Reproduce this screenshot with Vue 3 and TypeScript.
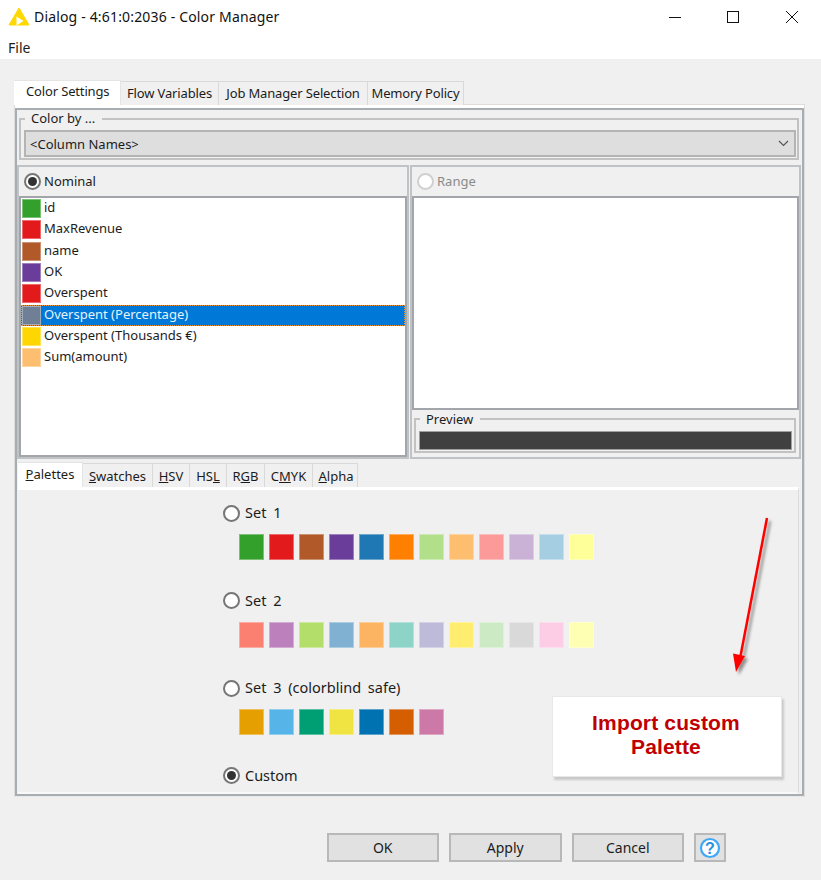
<script setup lang="ts">
const set1 = ['#33a02c', '#e31a1c', '#b15928', '#6a3d9a', '#1f78b4', '#ff7f00', '#b2df8a', '#fdbf6f', '#fb9a99', '#cab2d6', '#a6cee3', '#ffff99']
const set2 = ['#fb8072', '#bc80bd', '#b3de69', '#80b1d3', '#fdb462', '#8dd3c7', '#bebada', '#ffed6f', '#ccebc5', '#d9d9d9', '#fccde5', '#ffffb3']
const set3 = ['#e69f00', '#56b4e9', '#009e73', '#f0e442', '#0072b2', '#d55e00', '#cc79a7']
const palettes = [
  { label: 'Set 1', colors: set1, on: false },
  { label: 'Set 2', colors: set2, on: false },
  { label: 'Set 3 (colorblind safe)', colors: set3, on: false },
  { label: 'Custom', colors: [] as string[], on: true },
]
const columns = [
  { name: 'id', color: '#33a02c' },
  { name: 'MaxRevenue', color: '#e31a1c' },
  { name: 'name', color: '#b15928' },
  { name: 'OK', color: '#6a3d9a' },
  { name: 'Overspent', color: '#e31a1c' },
  { name: 'Overspent (Percentage)', color: '#6f7f95', sel: true },
  { name: 'Overspent (Thousands €)', color: '#ffd700' },
  { name: 'Sum(amount)', color: '#fdbf6f' },
]
const topTabs = ['Flow Variables', 'Job Manager Selection', 'Memory Policy']
</script>

<template>
  <div class="win">
    <header class="title">
      <svg class="logo" width="22" height="20" viewBox="0 0 22 20">
        <path d="M11 1 L21 18 H1 Z" fill="#ffd800" stroke="#ffd800" stroke-width="1" stroke-linejoin="round" />
        <path d="M8.5 9.5 L15.5 14 L8.5 18.5 Z" fill="#fff" />
      </svg>
      <span class="title-text">Dialog - 4:61:0:2036 - Color Manager</span>
      <svg class="wctl" width="14" height="14" viewBox="0 0 14 14"><path d="M1 7.5H13" stroke="#111" fill="none" /></svg>
      <svg class="wctl c2" width="14" height="14" viewBox="0 0 14 14"><rect x="1.5" y="1.5" width="11" height="11" stroke="#111" fill="none" /></svg>
      <svg class="wctl c3" width="14" height="14" viewBox="0 0 14 14"><path d="M1 1L13 13M13 1L1 13" stroke="#111" fill="none" /></svg>
    </header>
    <div class="menu">File</div>

    <main class="body">
      <div class="tabs">
        <div class="tab active">Color Settings</div>
        <div v-for="t in topTabs" :key="t" class="tab">{{ t }}</div>
      </div>
      <section class="pane">
        <div class="inner">
          <fieldset class="group colorby">
            <legend>Color by ...</legend>
            <div class="combo">
              <span>&lt;Column Names&gt;</span>
              <svg width="11" height="7" viewBox="0 0 11 7"><path d="M1 1L5.5 5.5L10 1" stroke="#555" stroke-width="1.2" fill="none" /></svg>
            </div>
          </fieldset>

          <div class="split">
            <div class="panel">
              <label class="radio-row head"><i class="radio on"></i><span class="lbl">Nominal</span></label>
              <ul class="list">
                <li v-for="c in columns" :key="c.name" :class="{ sel: c.sel }">
                  <i class="chip" :style="{ background: c.color }"></i>{{ c.name }}
                </li>
              </ul>
            </div>
            <div class="panel right">
              <label class="radio-row head dis"><i class="radio off"></i><span class="lbl">Range</span></label>
              <div class="list blank"></div>
              <fieldset class="group preview">
                <legend>Preview</legend>
                <div class="bar"></div>
              </fieldset>
            </div>
          </div>

          <div class="lower-tabs">
            <div class="ltab active"><u>P</u>alettes</div>
            <div class="ltab"><u>S</u>watches</div>
            <div class="ltab"><u>H</u>SV</div>
            <div class="ltab">HS<u>L</u></div>
            <div class="ltab">R<u>G</u>B</div>
            <div class="ltab">C<u>M</u>YK</div>
            <div class="ltab"><u>A</u>lpha</div>
          </div>
          <div class="lower-pane">
            <div v-for="p in palettes" :key="p.label" class="pal">
              <label class="radio-row"><i class="radio" :class="{ on: p.on }"></i><span class="lbl">{{ p.label }}</span></label>
              <div v-if="p.colors.length" class="swatches">
                <i v-for="c in p.colors" :key="c" class="sw" :style="{ background: c }"></i>
              </div>
            </div>
          </div>
        </div>
      </section>

      <footer class="actions">
        <button class="btn">OK</button>
        <button class="btn">Apply</button>
        <button class="btn">Cancel</button>
        <button class="btn help" aria-label="Help">
          <svg width="22" height="22" viewBox="0 0 22 22">
            <circle cx="11" cy="11" r="9" fill="#fff" stroke="#3fa9f5" stroke-width="2.2" />
            <text x="11" y="16.5" text-anchor="middle" class="q">?</text>
          </svg>
        </button>
      </footer>
    </main>

    <svg class="arrow" width="60" height="170" viewBox="0 0 60 170">
      <defs>
        <filter id="sh" x="-50%" y="-10%" width="200%" height="120%">
          <feDropShadow dx="3" dy="3" stdDeviation="1.5" flood-color="#000" flood-opacity="0.4" />
        </filter>
      </defs>
      <g filter="url(#sh)">
        <path d="M37 8 L10.5 146" stroke="#ff0000" stroke-width="2.5" fill="none" />
        <path d="M6 162 L3 143.5 L15 146 Z" fill="#ff0000" />
      </g>
    </svg>
    <div class="callout">Import custom<br />Palette</div>
  </div>
</template>

<style scoped>
.win {
  position: relative;
  width: 821px;
  height: 880px;
  overflow: hidden;
  background: #f0f0f0;
  color: #1c1c1c;
  font-family: "Noto Sans", "Open Sans", sans-serif;
  font-size: 13px;
}
.title {
  height: 33px;
  background: #fff;
  display: flex;
  align-items: center;
  padding-left: 8px;
  font-size: 14px;
}
.title-text { margin-left: 4px; flex: 1; color: #111; letter-spacing: 0.17px; }
.logo { flex: none; }
.wctl { flex: none; margin-right: 44px; }
.wctl.c2 { margin-right: 45px; }
.wctl.c3 { margin-right: 22px; }
.menu {
  height: 26px;
  background: #fff;
  padding-left: 8px;
  line-height: 29px;
  font-size: 14px;
}
.body { padding: 21px 16px 0 14px; }
.tabs { display: flex; align-items: flex-end; height: 25px; position: relative; z-index: 1; }
.tab {
  height: 24px;
  line-height: 22px;
  padding: 0;
  text-align: center;
  letter-spacing: -0.15px;
  border: 1px solid #d9d9d9;
  border-bottom: none;
  border-left: none;
  background: #f0f0f0;
  white-space: nowrap;
  box-sizing: border-box;
}
.tab.active {
  height: 25px;
  width: 107px;
  padding: 0 0 0 12px;
  text-align: left;
  line-height: 21px;
  background: #fff;
  border-color: #e4e4e4;
}
.tab:nth-child(2) { width: 98px; }
.tab:nth-child(3) { width: 149px; }
.tab:nth-child(4) { width: 96px; }
.pane {
  height: 693px;
  background: #fff;
  border: 1px solid #dcdcdc;
  border-bottom-color: #e8e8e8;
  box-sizing: border-box;
  padding: 3px 0 0 0;
  margin-top: -1px;
}
.inner {
  height: 100%;
  box-sizing: border-box;
  background: #f0f0f0;
  border: 2px solid #a8adb2;
  padding: 0 1px 0 0;
  display: flex;
  flex-direction: column;
}
.group {
  border: 2px solid #c2c2c2;
  margin: 0;
  padding: 0;
  min-width: 0;
}
.group legend {
  padding: 0 7px 2px 6px;
  margin-left: 1px;
  line-height: 12px;
  font-size: 13px;
}
.colorby { margin: 2px 2px 0 2px; height: 48px; box-sizing: border-box; padding: 0 1px 0 3px; flex: none; }
.combo {
  height: 27px;
  box-sizing: border-box;
  background: #dedede;
  border: 2px solid #b4b4b4;
  display: flex;
  align-items: center;
  justify-content: space-between;
  padding: 0 5px 0 4px;
  margin-top: 4px;
}
.split {
  display: grid;
  grid-template-columns: 392px 391px;
  gap: 1px;
  margin-top: 5px;
  height: 294px;
  flex: none;
}
.panel {
  border: 2px solid #bfc3c6;
  display: flex;
  flex-direction: column;
  box-sizing: border-box;
  height: 294px;
  min-width: 0;
}
.radio-row {
  display: flex;
  align-items: center;
  gap: 3px;
  line-height: 16px;
  white-space: nowrap;
}
.lbl { padding-bottom: 2px; }
.head { height: 29px; padding-left: 5px; flex: none; }
.dis { color: #8a8a8a; }
.radio {
  display: block;
  flex: none;
  width: 17px;
  height: 17px;
  box-sizing: border-box;
  border-radius: 50%;
  background: #fff;
  border: 2px solid #767676;
  position: relative;
}
.radio.on::after {
  content: "";
  position: absolute;
  left: 2px;
  top: 2px;
  width: 9px;
  height: 9px;
  border-radius: 50%;
  background: #333;
}
.radio.off { border-color: #d0d0d0; }
.list {
  margin: 0;
  padding: 0;
  list-style: none;
  background: #fff;
  border: 2px solid #a2a6aa;
  flex: 1;
  min-height: 0;
}
.list li {
  height: 21.33px;
  display: flex;
  align-items: flex-start;
  gap: 3px;
  padding-left: 1px;
  line-height: 19px;
  white-space: nowrap;
}
.list li.sel {
  background: #0078d7;
  color: #e8f2fb;
  outline: 1px dotted #e8953a;
  outline-offset: -1px;
}
.chip {
  display: block;
  flex: none;
  width: 19px;
  height: 19px;
  margin-top: 1px;
  box-sizing: border-box;
  border: 1px solid rgba(255, 255, 255, 0.35);
}
.right .list.blank { flex: none; height: 210px; }
.preview { margin: 2px 3px 0 2px; height: 41px; box-sizing: border-box; padding: 0 2px 0 3px; flex: none; }
.preview legend { line-height: 14px; padding-bottom: 0; }
.bar { height: 19px; box-sizing: border-box; background: #404040; border: 1px solid #a0a0a0; margin-top: 5px; }
.lower-tabs { display: flex; align-items: flex-end; height: 28px; margin-left: 1px; flex: none; }
.ltab {
  height: 24px;
  line-height: 24px;
  box-sizing: border-box;
  border: 1px solid #d9d9d9;
  border-left: none;
  border-bottom: none;
  text-align: center;
  white-space: nowrap;
}
.ltab.active { height: 25px; width: 65px; background: #fff; border-color: #e4e4e4; line-height: 22px; }
.ltab:nth-child(2) { width: 70px; }
.ltab:nth-child(3) { width: 37px; }
.ltab:nth-child(4) { width: 37px; }
.ltab:nth-child(5) { width: 38px; }
.ltab:nth-child(6) { width: 48px; }
.ltab:nth-child(7) { width: 45px; padding-left: 2px; }
.lower-pane {
  flex: 1;
  min-height: 0;
  overflow: hidden;
  margin-left: 1px;
  margin-right: 2px;
  border-top: 3px solid #fff;
  border-right: 1px solid #dcdcdc;
  border-bottom: 2px solid #f8f8f8;
  padding: 14px 0 0 205px;
  font-size: 14.5px;
}
.pal { height: 87.5px; }
.pal .radio-row { gap: 5px; word-spacing: 3px; height: 18px; }
.swatches { display: flex; gap: 5px; margin: 12px 0 0 16px; }
.sw {
  display: block;
  width: 25px;
  height: 26px;
  box-sizing: border-box;
  border: 1px solid rgba(255, 255, 255, 0.35);
}
.actions {
  display: flex;
  gap: 10px;
  margin-top: 36px;
  padding-left: 312.5px;
}
.btn {
  width: 112.5px;
  height: 29px;
  box-sizing: border-box;
  background: #e1e1e1;
  border: 2px solid #b8b8b8;
  padding: 0;
  font: inherit;
  font-size: 14px;
  color: #1c1c1c;
}
.help { width: 32px; display: flex; align-items: center; justify-content: center; }
.q { font-family: "Liberation Sans", sans-serif; font-weight: 700; font-size: 16px; fill: #2b8fe0; }
.arrow { position: absolute; left: 730px; top: 510px; overflow: visible; }
.callout {
  position: absolute;
  left: 552px;
  top: 696px;
  width: 230px;
  height: 81px;
  box-sizing: border-box;
  background: #fff;
  box-shadow: 2px 3px 2px rgba(0, 0, 0, 0.16);
  border: 1px solid #e8e8e8;
  color: #c00000;
  font-family: "Liberation Sans", Arial, sans-serif;
  font-weight: 700;
  font-size: 21px;
  letter-spacing: 0.15px;
  line-height: 24px;
  text-align: center;
  padding: 14px 2px 0 0;
}
</style>
